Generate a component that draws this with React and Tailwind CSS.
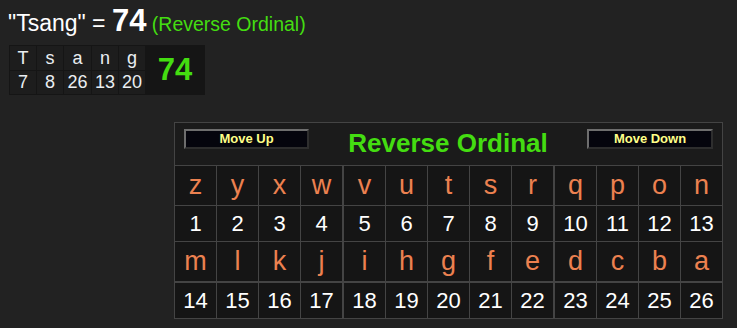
export default function App() {
  const row1 = ['z','y','x','w','v','u','t','s','r','q','p','o','n'];
  const row3 = ['m','l','k','j','i','h','g','f','e','d','c','b','a'];
  const cols = 'grid grid-cols-[41px_41px_41px_41px_42px_41px_41px_41px_41px_42px_41px_41px_41px] grid-rows-[39px_35px_39px_36px] gap-px';
  const cellBase = (i) =>
    'flex items-center justify-center bg-[#151515] ' + (i === 4 || i === 9 ? 'border-l border-[#444]' : '');
  const small = [['T','7'],['s','8'],['a','26'],['n','13'],['g','20']];
  return (
    <div className="min-h-[328px] w-[737px] bg-[#222222] font-['Liberation_Sans',Arial,sans-serif]">
      <div className="flex h-[45px] items-baseline pl-[8px] pt-[4px] leading-[34px] whitespace-nowrap">
        <span className="text-[23px] text-white whitespace-pre">"Tsang" = </span>
        <span className="text-[31px] font-bold text-white">74</span>
        <span className="text-[19.5px] text-[#44dd11] whitespace-pre"> (Reverse Ordinal)</span>
      </div>
      <div className="ml-[9px] flex w-[196px] gap-px bg-[#151515] p-px">
        <div className="grid grid-cols-[26px_26px_27px_26px_26px] grid-rows-[24px_23px] gap-px">
          {small.map(([l]) => (
            <div key={'l' + l} className="flex items-center justify-center bg-[#1d1d1d] text-[18px] text-[#eaeef2]">{l}</div>
          ))}
          {small.map(([l, n]) => (
            <div key={'n' + l} className="flex items-center justify-center bg-[#1d1d1d] text-[18px] text-[#eaeef2]">{n}</div>
          ))}
        </div>
        <div className="flex flex-1 items-center justify-center text-[31px] font-bold text-[#44dd11]">74</div>
      </div>
      <div className="ml-[174px] mt-[27px] flex w-[549px] flex-col gap-px bg-[#444] p-px">
        <div className="flex h-[42px] items-start justify-between bg-[#1b1b1b] px-[9px] pt-[6px]">
          <button className="flex h-[20px] w-[125px] items-center justify-center border-2 border-t-[#6e6e6e] border-l-[#6e6e6e] border-r-[#2e2e2e] border-b-[#2e2e2e] bg-[#05050d] text-[13px] font-bold text-[#ffff88]">Move Up</button>
          <div className="-mt-[1px] text-[26px] font-bold leading-[30px] text-[#44dd11]">Reverse Ordinal</div>
          <button className="flex h-[20px] w-[126px] items-center justify-center border-2 border-t-[#6e6e6e] border-l-[#6e6e6e] border-r-[#2e2e2e] border-b-[#2e2e2e] bg-[#05050d] text-[13px] font-bold text-[#ffff88]">Move Down</button>
        </div>
        <div className={cols}>
          {row1.map((l, i) => (
            <div key={'a' + i} className={cellBase(i) + ' text-[27px] text-[#ec8150]'}>{l}</div>
          ))}
          {row1.map((l, i) => (
            <div key={'b' + i} className={cellBase(i) + ' text-[22px] text-white'}>{i + 1}</div>
          ))}
          {row3.map((l, i) => (
            <div key={'c' + i} className={cellBase(i) + ' text-[27px] text-[#ec8150]'}>{l}</div>
          ))}
          {row3.map((l, i) => (
            <div key={'d' + i} className={cellBase(i) + ' border-t border-t-[#444] text-[22px] text-white'}>{i + 14}</div>
          ))}
        </div>
      </div>
    </div>
  );
}
